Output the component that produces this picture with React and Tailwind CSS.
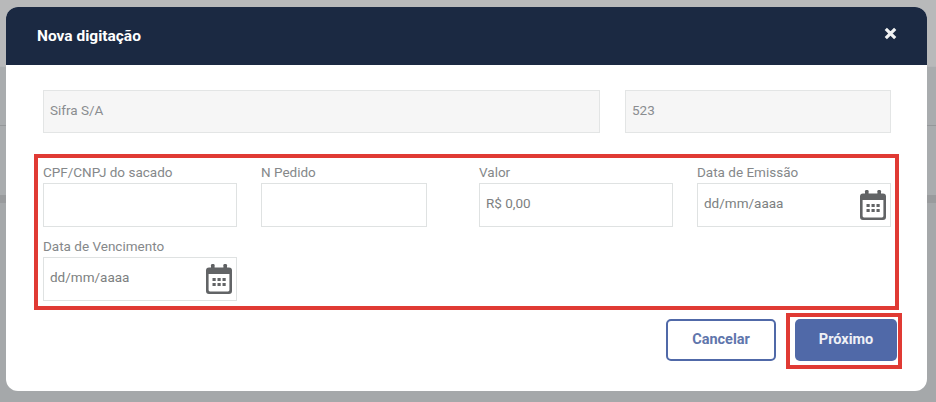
const font = { fontFamily: 'Roboto, "Liberation Sans", sans-serif' };

function CalendarIcon() {
  return (
    <svg width="26" height="31" viewBox="0 0 26 31" className="block">
      <rect x="5" y="0" width="3.6" height="6" rx="1.2" fill="#5f6163" />
      <rect x="17.4" y="0" width="3.6" height="6" rx="1.2" fill="#5f6163" />
      <path
        fillRule="evenodd"
        fill="#626466"
        d="M3 3.5h20a3 3 0 0 1 3 3V27a3 3 0 0 1-3 3H3a3 3 0 0 1-3-3V6.5a3 3 0 0 1 3-3zM2.6 10V26a1.4 1.4 0 0 0 1.4 1.4h18a1.4 1.4 0 0 0 1.4-1.4V10z"
      />
      {[6.5, 11.5, 16.5].map((x) =>
        [14, 19].map((y) => (
          <rect key={`${x}-${y}`} x={x} y={y} width="3.2" height="3" fill="#626466" />
        ))
      )}
    </svg>
  );
}

function Field({ label, value, date, width }) {
  return (
    <div className={width}>
      <label className="block h-[25px] pt-[6px] text-[13.5px] leading-[17px] text-[#85888a]">{label}</label>
      <div className="flex h-[44px] items-center justify-between border border-[#dfe2e2] bg-white pl-[6px] pr-[4px]">
        <span className="-mt-[3px] text-[13.5px] text-[#7d7f81]">{value}</span>
        {date && <CalendarIcon />}
      </div>
    </div>
  );
}

export default function App() {
  return (
    <div
      className="relative flex h-[402px] w-[936px] flex-col overflow-hidden bg-[#a5a8aa]"
      style={font}
    >
      <div className="h-[66px] bg-[#b8b9ba]" />
      <div className="h-[59px] border-t border-[#b4b6b8] bg-[#a9acae]" />
      <div className="h-[70px] border-t border-[#95989a] bg-[#a9acae]" />
      <div className="h-[8px] bg-[#999b9d]" />
      <div className="flex-1 bg-[#a5a8aa]" />

      <div className="absolute left-[6px] top-[7px] flex h-[384px] w-[921px] flex-col overflow-hidden rounded-[12px] bg-white">
        <div className="flex h-[58px] shrink-0 items-center justify-between bg-[#1b2942] pl-[31px] pr-[30px]">
          <h2 className="mt-[1px] text-[15.5px] font-bold text-white">Nova digitação</h2>
          <svg width="13" height="13" viewBox="0 0 13 13" className="-mt-[6px]">
            <path d="M1.8 1.8l9.4 9.4M11.2 1.8l-9.4 9.4" stroke="#f1f2f3" strokeWidth="3.2" strokeLinecap="butt" />
          </svg>
        </div>

        <div className="flex flex-1 flex-col pl-[28px] pr-[29px] pt-[25px]">
          <div className="ml-[9px] flex gap-[25px]">
            <div className="flex h-[43px] w-[557px] items-center border border-[#e3e5e5] bg-[#f6f6f6] pl-[6px]">
              <span className="-mt-[2px] text-[13.5px] text-[#8a8d90]">Sifra S/A</span>
            </div>
            <div className="flex h-[43px] w-[266px] items-center border border-[#e3e5e5] bg-[#f6f6f6] pl-[6px]">
              <span className="-mt-[2px] text-[13.5px] text-[#8a8d90]">523</span>
            </div>
          </div>

          <div className="mt-[21px] h-[156px] w-[865px] border-4 border-[#e03a34] pl-[5px]">
            <div className="grid grid-cols-[218px_218px_218px_194px] gap-y-[5px]">
              <Field label="CPF/CNPJ do sacado" value="" width="w-[194px]" />
              <Field label="N Pedido" value="" width="w-[166px]" />
              <Field label="Valor" value="R$ 0,00" width="w-[194px]" />
              <Field label="Data de Emissão" value="dd/mm/aaaa" date width="w-[194px]" />
              <Field label="Data de Vencimento" value="dd/mm/aaaa" date width="w-[194px]" />
            </div>
          </div>

          <div className="mt-[3px] flex items-start justify-end gap-[10px]">
            <button className="mt-[6px] h-[42px] w-[110px] rounded-[5px] border-2 border-[#5069a8] bg-white text-[14.5px] font-bold text-[#5f76ac]">
              Cancelar
            </button>
            <div className="-mr-[4px] h-[56px] w-[116px] border-4 border-[#e03a34] pl-[5px] pt-[2px]">
              <button className="block h-[42px] w-[102px] rounded-[5px] bg-[#5069a8] text-[14.5px] font-bold text-[#eef0f6]">
                Próximo
              </button>
            </div>
          </div>
        </div>
      </div>
    </div>
  );
}
